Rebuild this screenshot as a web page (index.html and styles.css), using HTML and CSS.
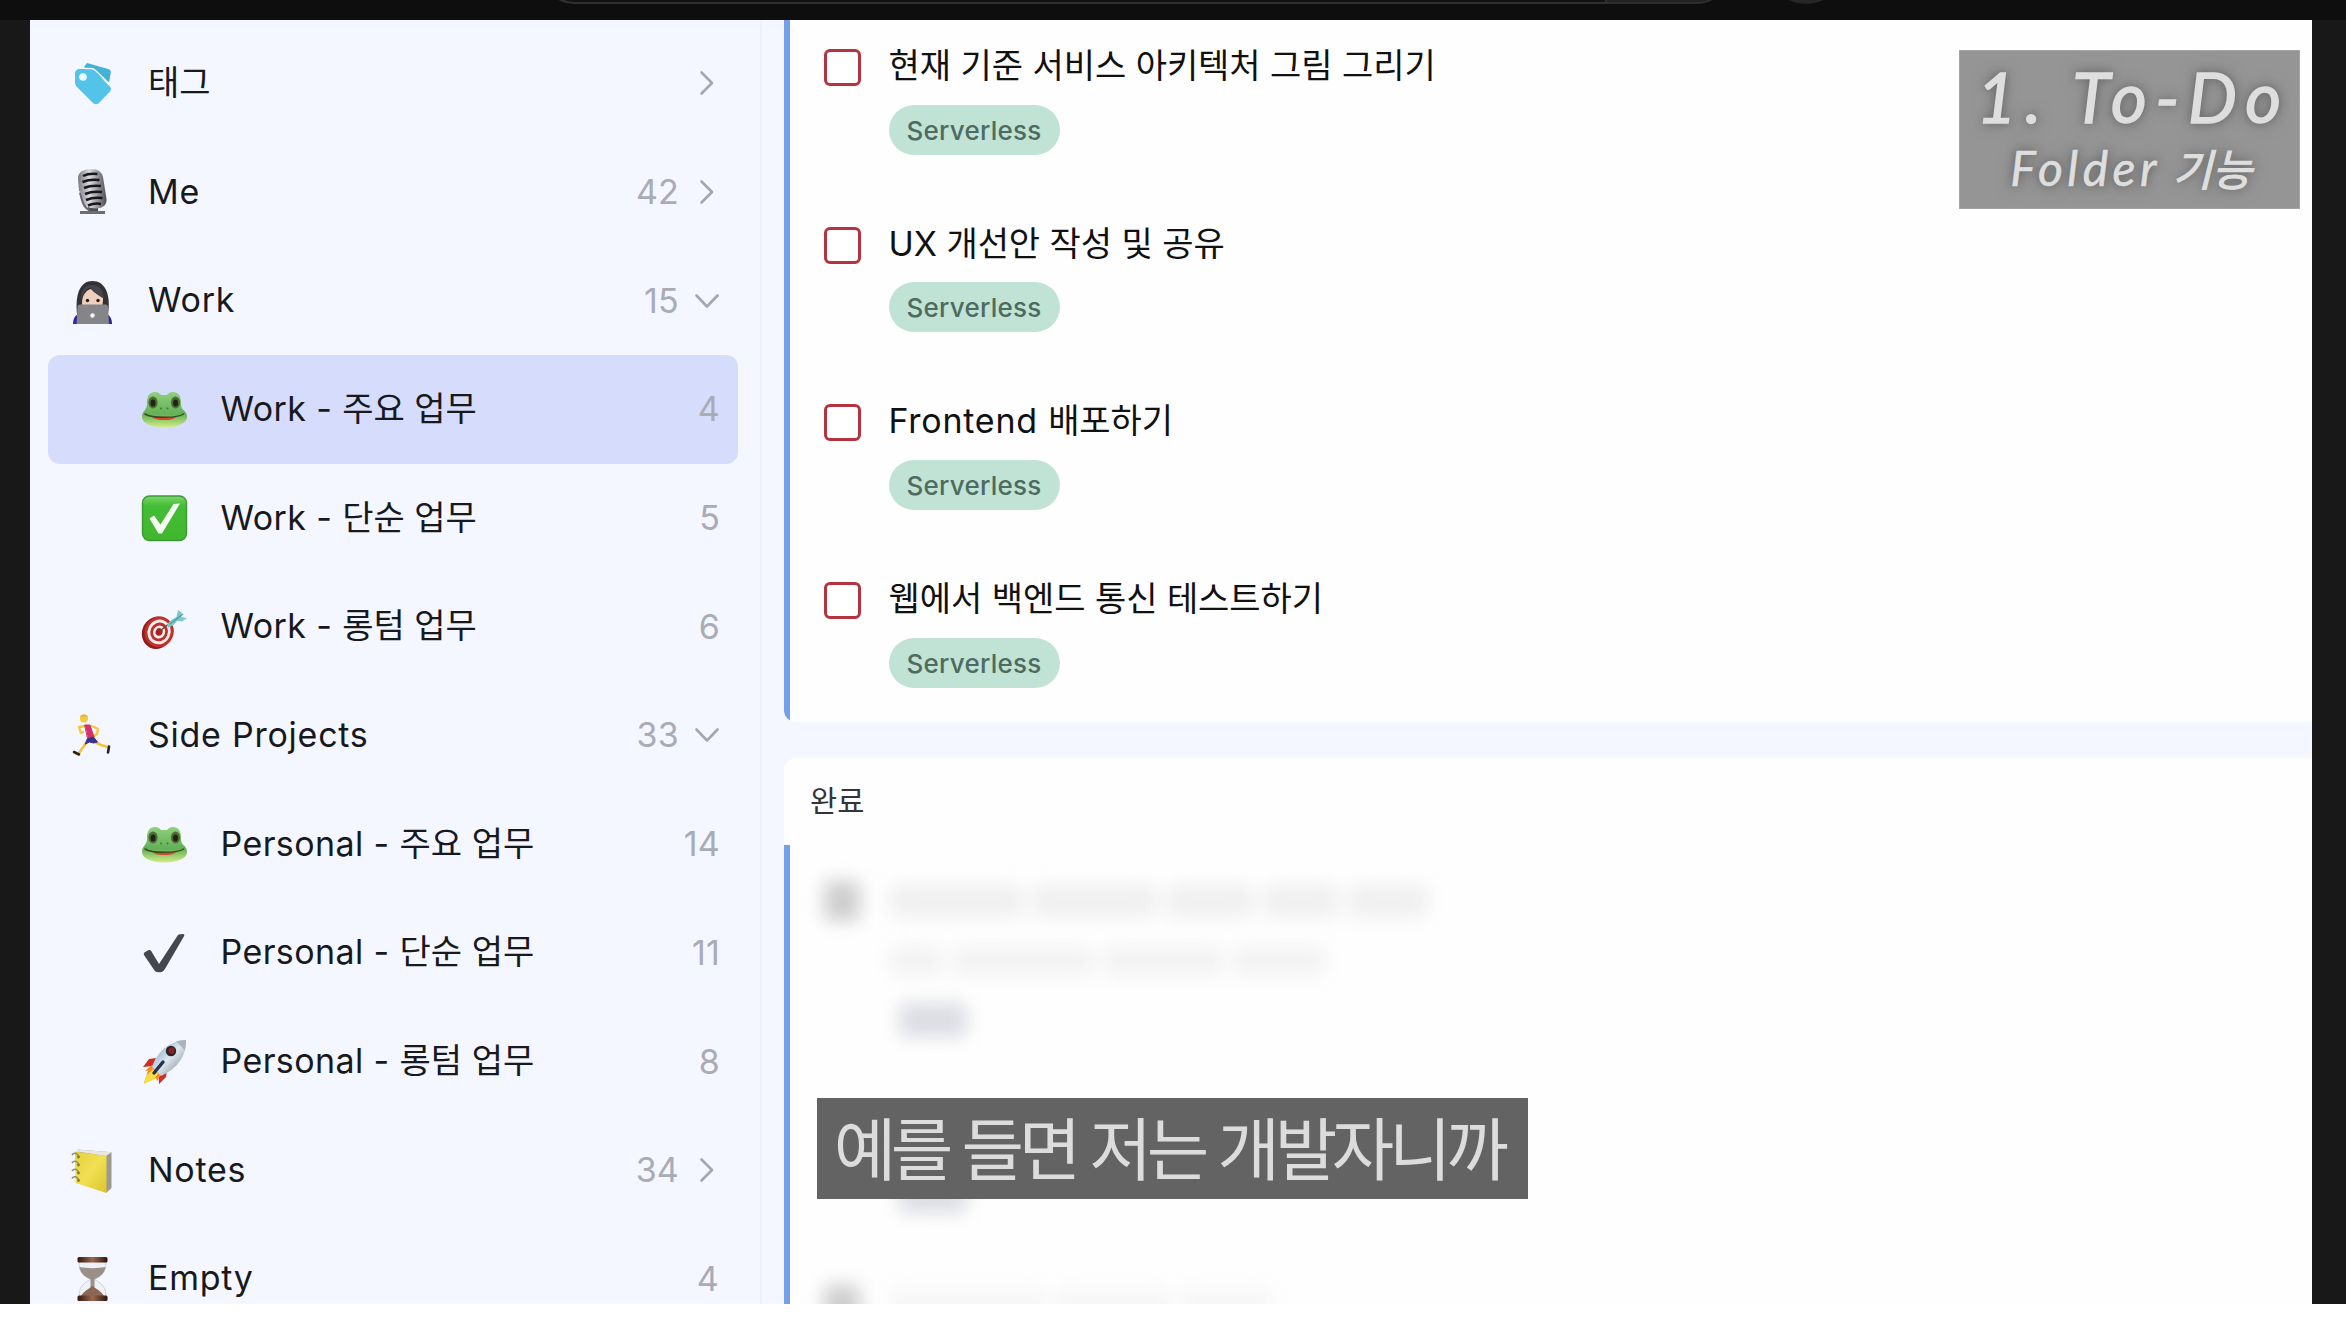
FILE: index.html
```html
<!DOCTYPE html>
<html lang="ko">
<head>
<meta charset="utf-8">
<title>To-Do</title>
<link rel="stylesheet" href="styles.css">
</head>
<body>
<svg class="defs" width="0" height="0" aria-hidden="true">
  <defs>
    <linearGradient id="gGreen" x1="0" y1="0" x2="0" y2="1"><stop offset="0" stop-color="#8fd07c"/><stop offset=".62" stop-color="#62b057"/><stop offset="1" stop-color="#d3ee86"/></linearGradient>
    <linearGradient id="gBox" x1="0" y1="0" x2="0" y2="1"><stop offset="0" stop-color="#7cd86b"/><stop offset=".22" stop-color="#43bd36"/><stop offset="1" stop-color="#41b62e"/></linearGradient>
    <linearGradient id="gMic" x1="0" y1="0" x2="1" y2="0"><stop offset="0" stop-color="#77777c"/><stop offset=".4" stop-color="#dcdce0"/><stop offset="1" stop-color="#4c4c52"/></linearGradient>
    <linearGradient id="gNote" x1="0" y1="0" x2="1" y2="1"><stop offset="0" stop-color="#e6d13e"/><stop offset=".5" stop-color="#f1e052"/><stop offset="1" stop-color="#dcc52e"/></linearGradient>
    <linearGradient id="gWood" x1="0" y1="0" x2="1" y2="0"><stop offset="0" stop-color="#34150f"/><stop offset=".5" stop-color="#9a6a50"/><stop offset="1" stop-color="#2e120d"/></linearGradient>
    <linearGradient id="gHull" x1="0" y1="0" x2="1" y2="1"><stop offset="0" stop-color="#5f93bb"/><stop offset=".5" stop-color="#dfe7ee"/><stop offset="1" stop-color="#6d7a88"/></linearGradient>
    <symbol id="chev-right" viewBox="0 0 24 28"><path d="M6.500 3.500 17 14 6.500 24.500" fill="none" stroke="#a5a7b0" stroke-width="2.600" stroke-linecap="round" stroke-linejoin="round"/></symbol>
    <symbol id="chev-down" viewBox="0 0 24 28"><path d="M1.500 8.500 12 19.500 22.500 8.500" fill="none" stroke="#a5a7b0" stroke-width="2.600" stroke-linecap="round" stroke-linejoin="round"/></symbol>
    <symbol id="frog" viewBox="0 0 48 48">
      <path d="M7 17c0-6 3-10 8-10 3 0 5 1.500 6 3h6c1-1.500 3-3 6-3 5 0 8 4 8 10 0 3 0 5 1.500 7 2.500 2.500 4.500 4 4.500 8 0 6-9 10.500-22.500 10.500S2 38 2 32c0-4 2-5.500 3.500-8 1.500-2 1.500-4 1.500-7z" fill="url(#gGreen)"/>
      <ellipse cx="13" cy="17.500" rx="4.600" ry="6" fill="#4e6b35"/><ellipse cx="35.500" cy="17.500" rx="4.600" ry="6" fill="#4e6b35"/>
      <ellipse cx="13" cy="18" rx="2.500" ry="3.600" fill="#23201a"/><ellipse cx="35.500" cy="18" rx="2.500" ry="3.600" fill="#23201a"/>
      <circle cx="21" cy="23.500" r="1" fill="#3f7a3c"/><circle cx="27.500" cy="23.500" r="1" fill="#3f7a3c"/>
      <path d="M12 32.500c5-1 19-1 24.500 0-5 3.400-19 3.400-24.500 0z" fill="#d34a2e"/>
      <path d="M5 29c4 2.500 10 3.300 19.300 3.300S40 31.500 43.500 29" fill="none" stroke="#3c4a22" stroke-width="1.500" stroke-linecap="round"/>
    </symbol>
  </defs>
</svg>
<div class="page">
  <header class="topbar">
    <div class="search"><span class="search-btn"></span></div>
    <div class="voice"></div>
  </header>
  <div class="stage">
    <main class="app">
      <nav class="sidebar">
        <div class="row">
          <svg class="icon" viewBox="0 0 48 48"><path d="M16 8 19 4 40 10c2 .6 3 1.500 2.800 3.500L41 24z" fill="#42b2d8"/><path d="M7 15c0-3 1.500-5 5-5h9c2 0 3.500.5 5 2l15.500 15c2 2 2 4 0 6L31 44c-2 1.800-4 1.800-6 0L9 28c-1.500-1.500-2-3-2-5z" fill="#54c3ea"/><path d="M17 9.500h5.500c2 0 3.500.6 5 2L42.500 26" fill="none" stroke="#eefaff" stroke-width="1.600"/><circle cx="15" cy="18" r="3.800" fill="#effbff"/></svg>
          <span class="name">태그</span><span class="count"></span><svg class="chev"><use href="#chev-right"/></svg>
        </div>
        <div class="row">
          <svg class="icon" viewBox="0 0 48 48"><path d="M20 38h10v7H20z" fill="#4b4b50"/><path d="M12 44.500h25" stroke="#6c6c72" stroke-width="3"/><path d="M10 10C10 4 16 1 23 1c7 0 11 3 12 8l3.500 22c.6 5-3 9.500-10.500 9.500-8 0-12.500-3-13.500-8L13 24l-2-1z" fill="url(#gMic)"/><path d="M15 8c5-2.600 9-2.800 14.500-2M14.500 14c6-2.600 10.500-2.800 17-2M16 20c6-2.600 10.500-2.800 17-2M17 26c6-2.600 10.500-2.800 17-2M18 32c6-2.600 10.500-2.800 16.500-2M20 37.500c5-2.200 8-2.400 13-1.600" fill="none" stroke="#17171b" stroke-width="2.500"/><path d="M12 24.500c2 8 3 15 10 18" fill="none" stroke="#67676d" stroke-width="2"/></svg>
          <span class="name"><span class="latin">Me</span></span><span class="count">42</span><svg class="chev"><use href="#chev-right"/></svg>
        </div>
        <div class="row">
          <svg class="icon" viewBox="0 0 48 48"><path d="M5 47c0-5 2-9 6-10h27c4 1 6 5 6 10z" fill="#2c25a0"/><path d="M9 37C7 17 12 4 24.500 4S43 17 40 37z" fill="#343237"/><path d="M14 27c0-10 5-14 9-15 3 4 8 6 12 8 .5 10-3 16-10.500 16S14 32 14 27z" fill="#efcfbd"/><path d="M13 24c1-7 4-12 10-14 3 6 7 8 13 12-1-9-4-14-11.500-14S12 14 13 24z" fill="#47444a"/><circle cx="19.500" cy="23.500" r="1.700" fill="#2b1b17"/><circle cx="30" cy="23.500" r="1.700" fill="#2b1b17"/><path d="M9.500 30c0-1.500.8-2.500 2.500-2.500h25.500c1.500 0 2.500 1 2.500 2.500L41 47H8.500z" fill="#858589"/><circle cx="24.500" cy="38.500" r="2.200" fill="#f5f5f7"/></svg>
          <span class="name"><span class="latin">Work</span></span><span class="count">15</span><svg class="chev"><use href="#chev-down"/></svg>
        </div>
        <div class="row child selected"><svg class="icon"><use href="#frog"/></svg><span class="name"><span class="latin">Work - </span>주요 업무</span><span class="count">4</span></div>
        <div class="row child">
          <svg class="icon" viewBox="0 0 48 48"><rect x="2.500" y="2" width="44" height="44.500" rx="7" fill="url(#gBox)" stroke="#3b9a33" stroke-width="1.400"/><path d="M9.500 24.500 14 21.500l6.500 9L33.500 10l6.500-.5L22 39.500h-3.500z" fill="#f4fff1"/></svg>
          <span class="name"><span class="latin">Work - </span>단순 업무</span><span class="count">5</span>
        </div>
        <div class="row child">
          <svg class="icon" viewBox="0 0 48 48"><g transform="rotate(25 18 29)"><ellipse cx="17.500" cy="30" rx="15" ry="16.500" fill="#8e1c1c"/><ellipse cx="19" cy="28.500" rx="14.500" ry="15.500" fill="#c3302c"/><ellipse cx="19" cy="28.500" rx="11.500" ry="12.500" fill="#f7eeec"/><ellipse cx="19" cy="28.500" rx="8.700" ry="9.500" fill="#bb2f2d"/><ellipse cx="19" cy="28.500" rx="6" ry="6.600" fill="#f7eeec"/><ellipse cx="19" cy="28.500" rx="3.400" ry="3.800" fill="#a72320"/></g><path d="m20 28 10-8" stroke="#6f4a3c" stroke-width="1.600"/><path d="M27 22.500c1-3 4-5.500 9.500-8.500L38 7l4 3-1 4 6 1-5 3.500-5-.5c-3 4-6 6-9 6.500z" fill="#7cc6cd"/><path d="M30 21 43 11" stroke="#4d9aa6" stroke-width="1.300"/></svg>
          <span class="name"><span class="latin">Work - </span>롱텀 업무</span><span class="count">6</span>
        </div>
        <div class="row">
          <svg class="icon" viewBox="0 0 48 48" fill="none" stroke-linecap="round" stroke-linejoin="round"><path d="m20 29-4 6-5 7M25 30l8 4 7 2" stroke="#f0c43a" stroke-width="2.600"/><path d="M6 41 11 43.500M41 35.500l-1 6" stroke="#26222c" stroke-width="2.600"/><path d="m17 15-6 1 2 6 2-1M24 15l6 3-1 5-3 2" stroke="#f3c944" stroke-width="2.400"/><path d="m17 14 5 0 4 12-6 2z" fill="#d3326d" stroke="#d3326d"/><path d="m19.500 28 6-2 4 5-4 1-4-1-4 2z" fill="#38338f" stroke="#38338f"/><circle cx="16" cy="7.500" r="4" fill="#f4c83f"/><path d="M12 6c1-3 6-3.500 8 0l-3-1z" fill="#e4b02f"/></svg>
          <span class="name"><span class="latin">Side Projects</span></span><span class="count">33</span><svg class="chev"><use href="#chev-down"/></svg>
        </div>
        <div class="row child"><svg class="icon"><use href="#frog"/></svg><span class="name"><span class="latin">Personal - </span>주요 업무</span><span class="count">14</span></div>
        <div class="row child">
          <svg class="icon" viewBox="0 0 48 48"><path d="M4 26c-.6-1.500 0-2.300 1.200-3l3-1.700c1.300-.7 2.200-.4 3 .8L19 35 37 7.500C38 6 38.500 5.300 40 5.200l3-.2c1.300 0 1.700 1 1 2.200L25.500 39c-1.800 3-3 4.300-6.500 4.300-3.200 0-4.200-1-5.800-3.800z" fill="#45464e"/></svg>
          <span class="name"><span class="latin">Personal - </span>단순 업무</span><span class="count">11</span>
        </div>
        <div class="row child">
          <svg class="icon" viewBox="0 0 48 48"><path d="m16 20-7 1-6 8 10-1zM27 32l-1 7-7 7-.5-9z" fill="#cd2f24"/><path d="m12 27-7 6 3-.5L4 45l12-5 1 3 5-8z" fill="#f08a24"/><path d="m13 31-7 7-2 8 9-4 5-6z" fill="#f7dd45"/><path d="M12 29C17 14 29 3 46 2c1 15-9 29-25 36z" fill="url(#gHull)"/><path d="M36 3.500C40 2.300 43 2 46 2c.2 3-.3 6.500-1.300 10z" fill="#a9b4bf"/><circle cx="31" cy="13" r="5.200" fill="#2c2328"/><circle cx="31.500" cy="12.500" r="3.100" fill="#8d2027"/><path d="m14 35 9-11" stroke="#22344c" stroke-width="3.400" stroke-linecap="round"/></svg>
          <span class="name"><span class="latin">Personal - </span>롱텀 업무</span><span class="count">8</span>
        </div>
        <div class="row">
          <svg class="icon" viewBox="0 0 48 48"><path d="m9 3.500 34.500 2.700V42L38 47z" fill="#9b9a92"/><path d="m9 3.500 34.500 2.700L38 10 9 5.500z" fill="#e9e8e0"/><path d="M7 5.500 38.500 10v37L7.500 37z" fill="url(#gNote)"/><g fill="none" stroke="#8f8c80" stroke-width="1.500"><path d="M4 9c2-3 5-2 6.500 1M4 17c2-3 5-2 6.500 1M4 25c2-3 5-2 6.500 1M4 32.500c2-3 5-2 6.500 1"/></g><g fill="#857a2c"><circle cx="10.500" cy="11" r="1.400"/><circle cx="10.500" cy="19" r="1.400"/><circle cx="10.500" cy="27" r="1.400"/><circle cx="10.500" cy="34.500" r="1.400"/></g></svg>
          <span class="name"><span class="latin">Notes</span></span><span class="count">34</span><svg class="chev"><use href="#chev-right"/></svg>
        </div>
        <div class="row">
          <svg class="icon" viewBox="0 0 48 48"><path d="M11 7h27c0 9-3 13-11.500 17.500C35 29 38 33 38 42H11c0-9 3-13 11.500-17.500C14 20 11 16 11 7z" fill="#eef1f7" stroke="#c5c8cf" stroke-width=".8"/><path d="M11.500 12c8 1.500 18 1.500 26 0-1 6-4 9-11 12.300v8h-4v-8C15.500 21 12.500 18 11.500 12z" fill="#9b8f8a"/><path d="M24.500 31c4 3 8.500 5 11.500 10H13c3-5 7.500-7 11.500-10z" fill="#8b6753"/><rect x="9.500" y="2" width="30" height="5.500" rx="1.500" fill="url(#gWood)"/><rect x="9.500" y="40.500" width="30" height="5.500" rx="1.500" fill="url(#gWood)"/></svg>
          <span class="name"><span class="latin">Empty</span></span><span class="count">4</span>
        </div>
      </nav>
      <section class="board">
        <div class="card todo">
          <div class="task"><span class="box"></span><div><div class="title">현재 기준 서비스 아키텍처 그림 그리기</div><span class="tag">Serverless</span></div></div>
          <div class="task"><span class="box"></span><div><div class="title">UX 개선안 작성 및 공유</div><span class="tag">Serverless</span></div></div>
          <div class="task"><span class="box"></span><div><div class="title"><span class="latin">Frontend </span>배포하기</div><span class="tag">Serverless</span></div></div>
          <div class="task"><span class="box"></span><div><div class="title">웹에서 백엔드 통신 테스트하기</div><span class="tag">Serverless</span></div></div>
        </div>
        <div class="card done">
          <div class="done-title">완료</div>
          <div class="done-list">
            <div class="hidden-task">
              <i class="blur b-box"></i>
              <div class="hidden-body">
                <div class="line l1"><i class="blur w1"></i><i class="blur w2"></i><i class="blur w3"></i><i class="blur w4"></i><i class="blur w5"></i></div>
                <div class="line l2"><i class="blur w6"></i><i class="blur w7"></i><i class="blur w8"></i><i class="blur w9"></i></div>
                <i class="blur b-tag"></i>
              </div>
            </div>
            <div class="hidden-task second">
              <div class="hidden-body"><i class="blur b-tag"></i></div>
            </div>
            <div class="hidden-task third">
              <i class="blur b-box"></i>
              <div class="line l1"><i class="blur w10"></i><i class="blur w11"></i><i class="blur w12"></i></div>
            </div>
          </div>
        </div>
      </section>
    </main>
    <div class="badge"><div class="badge-top">1. To-Do</div><div class="badge-sub">Folder <span class="badge-ko">기능</span></div></div>
    <div class="caption"><span>예를 들면 저는 개발자니까</span></div>
  </div>
</div>
</body>
</html>
```
FILE: styles.css
```css
* { box-sizing: border-box; }
body { margin: 0; background: #fff; overflow: hidden; font-family: Inter, "Noto Sans CJK KR", sans-serif; }
.defs { position: absolute; }
.page { width: 2346px; height: 1330px; display: flex; flex-direction: column; overflow: hidden; }

.topbar { height: 20px; flex: none; background: #0e0e0e; display: flex; align-items: flex-start; gap: 31px; padding-left: 536px; overflow: hidden; }
.search { width: 1199px; height: 80px; margin-top: -76px; flex: none; border: 2px solid #303030; border-radius: 40px; background: #121212; display: flex; justify-content: flex-end; overflow: hidden; }
.search-btn { width: 128px; background: #222; border-left: 2px solid #303030; }
.voice { width: 80px; height: 80px; margin-top: -76px; flex: none; border-radius: 50%; background: #262626; }

.stage { position: relative; height: 1284px; flex: none; background: #181818; padding: 0 34px 0 30px; }
.app { height: 100%; display: flex; background: #f4f7ff; overflow: hidden; }

.sidebar { width: 732px; flex: none; padding: 9px 22px 0 18px; border-right: 2px solid #eef0fa; }
.row { height: 108.7px; display: flex; align-items: center; padding: 0 19px 0 20px; border-radius: 12px; color: #18191d; font-size: 34px; line-height: 44px; white-space: nowrap; }
.row.child { padding-left: 92px; padding-right: 18px; }
.row.selected { background: #d6dcfb; }
.icon { width: 48px; height: 48px; flex: none; }
.name { margin-left: 32px; padding-bottom: 1px; flex: 1; }
.child .name { margin-left: 32.5px; }
.latin { letter-spacing: .75px; }
.child .latin { letter-spacing: .4px; }
.count { color: #a9abb5; letter-spacing: .2px; }
.chev { width: 24px; height: 28px; margin-left: 16px; flex: none; }

.board { flex: 1; min-width: 0; display: flex; flex-direction: column; gap: 36px; padding-left: 22px; }
.card { background: #fefefe; }
.todo { height: 702px; flex: none; background: linear-gradient(90deg, #759fe6 6px, #fefefe 6px); border-radius: 0 0 0 12px; padding: 20px 0 0 40px; display: flex; flex-direction: column; }
.task { height: 177.7px; flex: none; display: flex; gap: 27.5px; }
.box { width: 37px; height: 37px; margin-top: 9px; border: 3px solid #b5323f; border-radius: 6px; background: #fff; flex: none; }
.title { height: 64.5px; padding-top: 4px; line-height: 44px; font-size: 34px; letter-spacing: -.05px; color: #111; white-space: nowrap; }
.tag { display: flex; align-items: center; justify-content: center; width: 171px; height: 50px; padding-top: 1px; border-radius: 25px; background: #c1e3d5; color: #4d6b60; font-size: 26px; font-weight: 500; letter-spacing: .25px; }
.done { flex: 1; border-radius: 12px 0 0 0; display: flex; flex-direction: column; }
.done-title { height: 87px; flex: none; padding-left: 26px; line-height: 86px; font-size: 29.5px; color: #33343a; }
.done-list { flex: 1; border-left: 6px solid #759fe6; padding: 36px 0 0 34px; }

.hidden-task { height: 260px; display: flex; gap: 30px; }
.blur { display: block; filter: blur(9px); background: #efefef; height: 32px; border-radius: 6px; }
.b-box { width: 36px; height: 40px; background: #cdcdcd; flex: none; }
.line { display: flex; gap: 9px; align-items: center; height: 40px; }
.l2 { margin-top: 20px; }
.l2 .blur { background: #f2f2f2; height: 28px; }
.w1 { width: 133px; } .w2 { width: 125px; } .w3 { width: 88px; } .w4 { width: 76px; } .w5 { width: 80px; }
.w6 { width: 53px; } .w7 { width: 141px; } .w8 { width: 122px; } .w9 { width: 92px; }
.w10 { width: 156px; } .w11 { width: 116px; } .w12 { width: 92px; }
.third .line .blur { background: #f6f6f6; }
.b-tag { width: 68px; height: 34px; margin: 22px 0 0 9px; background: #dbdde3; }
.second { height: 144px; padding-left: 66px; }
.second .b-tag { margin-top: 38px; }

.badge { position: absolute; left: 1959px; top: 30px; width: 341px; height: 159px; background: #959595; border: 1px solid #a4a4a4; color: #dedede; text-align: center; white-space: nowrap; font-family: Lato, "Noto Sans CJK KR", sans-serif; font-style: italic; text-shadow: 0 0 10px #606060, 0 0 16px #747474; -webkit-text-stroke: 1.5px #dedede; }
.badge-top { height: 92px; line-height: 91px; font-size: 69px; letter-spacing: 8.5px; padding-left: 7px; }
.badge-sub { height: 56px; line-height: 50px; font-size: 48px; letter-spacing: 4.5px; padding-left: 3px; -webkit-text-stroke-width: .6px; }
.badge-ko { font-size: 43px; letter-spacing: 0; margin-left: -3px; -webkit-text-stroke-width: 1.2px; }
.caption { position: absolute; left: 817px; top: 1078px; width: 711px; height: 101px; padding: 0 8px 6px 0; background: #636363; color: #dcdcdc; display: flex; align-items: center; justify-content: center; font: 400 68px "Noto Sans CJK KR", sans-serif; letter-spacing: -5.4px; white-space: nowrap; }
```
